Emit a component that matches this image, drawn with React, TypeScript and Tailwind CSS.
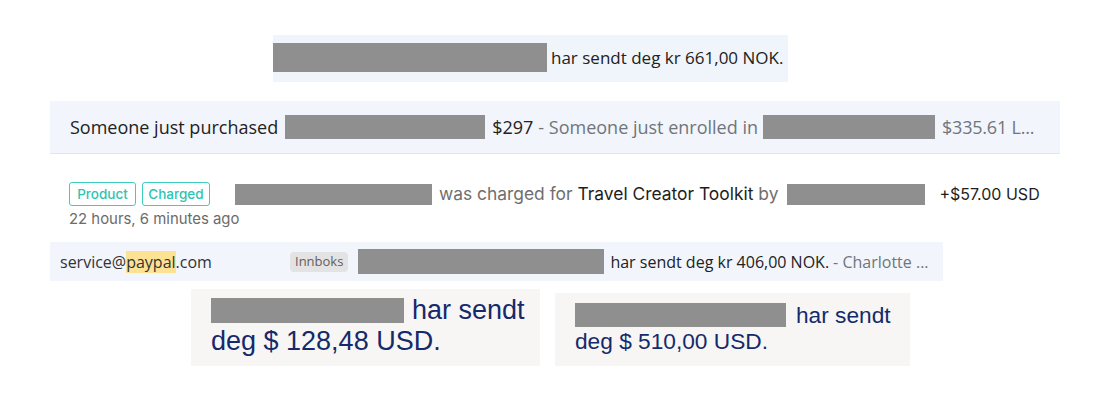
import React from "react";

export default function App() {
  return (
    <div className="w-[1100px] h-[400px] bg-white flex flex-col overflow-hidden">
      {/* Row 1 */}
      <div className="mt-[35px] ml-[273px] w-[515px] h-[47px] bg-[#f0f4fb] flex items-center font-['Open_Sans',sans-serif] text-[17px] text-[#222]">
        <span className="inline-block bg-[#8f8f8f] w-[274px] h-[29px] -mt-[3px]" />
        <span className="ml-[4px] -mt-[2px]">har sendt deg kr 661,00 NOK.</span>
      </div>

      {/* Row 2 */}
      <div className="mt-[19px] ml-[50px] w-[1010px] h-[53px] bg-[#f2f5fc] border-b border-[#e2e5ea] flex items-center pl-[20px] font-['Open_Sans',sans-serif] text-[18px] whitespace-nowrap">
        <span className="text-[#222]">Someone just purchased</span>
        <span className="inline-block bg-[#8f8f8f] w-[200px] h-[24px] ml-[7px]" />
        <span className="text-[#222] ml-[7px]">$297</span>
        <span className="text-[#70757a] ml-[5px]">- Someone just enrolled in</span>
        <span className="inline-block bg-[#8f8f8f] w-[172px] h-[24px] ml-[5px]" />
        <span className="text-[#70757a] ml-[7px] tracking-[-0.2px]">$335.61 L...</span>
      </div>

      {/* Row 3 */}
      <div className="mt-[28px] ml-[69px] flex items-start font-['Inter',sans-serif] whitespace-nowrap">
        <div className="flex flex-col w-[166px]">
          <div className="flex gap-[6px]">
            <span className="h-[24px] w-[67px] border border-[#3ccfc0] rounded-[3px] text-[#2ec4b3] text-[13.5px] font-medium flex items-center justify-center">
              Product
            </span>
            <span className="h-[24px] w-[68px] border border-[#3ccfc0] rounded-[3px] text-[#2ec4b3] text-[13.5px] font-medium flex items-center justify-center">
              Charged
            </span>
          </div>
          <span className="mt-[4px] text-[14.9px] leading-[18px] text-[#6b6b6b]">22 hours, 6 minutes ago</span>
        </div>
        <div className="flex items-center h-[22px] mt-[1px] text-[17.4px]">
          <span className="inline-block bg-[#8f8f8f] w-[197px] h-[21px]" />
          <span className="ml-[7px] text-[#6f6f6f]">was charged for</span>
          <span className="ml-[5px] text-[#1e1e1e]">Travel Creator Toolkit</span>
          <span className="ml-[5px] text-[#6f6f6f]">by</span>
          <span className="inline-block bg-[#8f8f8f] w-[138px] h-[21px] ml-[9px]" />
          <span className="ml-[14px] text-[16px] text-[#1e1e1e]">+$57.00 USD</span>
        </div>
      </div>

      {/* Row 4 */}
      <div className="mt-[14px] ml-[50px] w-[893px] h-[39px] bg-[#f2f5fc] flex items-center pl-[10px] font-['Open_Sans',sans-serif] text-[16px] whitespace-nowrap">
        <span className="w-[230px] text-[#333]">
          service@<span className="bg-[#fde293]">paypal</span>.com
        </span>
        <span className="h-[20px] px-[5px] rounded-[4px] bg-[#e3e3e3] text-[#5f5f5f] text-[13px] flex items-center">Innboks</span>
        <span className="inline-block bg-[#8f8f8f] w-[246px] h-[25px] ml-[10px]" />
        <span className="ml-[6px] text-[#222]">har sendt deg kr 406,00 NOK.</span>
        <span className="ml-[4px] text-[#70757a]">- Charlotte ...</span>
      </div>

      {/* Row 5 */}
      <div className="mt-[8px] flex items-start font-['Liberation_Sans',Arial,sans-serif] text-[#152a6b] whitespace-nowrap">
        <div className="ml-[191px] w-[349px] h-[77px] bg-[#f7f6f5] pl-[20px] pt-[6px] flex flex-col text-[27px] leading-[31px]">
          <div className="flex items-center">
            <span className="inline-block bg-[#8f8f8f] w-[193px] h-[25px]" />
            <span className="ml-[8px]">har sendt</span>
          </div>
          <div>deg $ 128,48 USD.</div>
        </div>
        <div className="ml-[15px] mt-[4px] w-[355px] h-[73px] bg-[#f7f6f5] pl-[20px] pt-[9px] flex flex-col text-[22.7px] leading-[26px]">
          <div className="flex items-center">
            <span className="inline-block bg-[#8f8f8f] w-[211px] h-[24px]" />
            <span className="ml-[10px]">har sendt</span>
          </div>
          <div>deg $ 510,00 USD.</div>
        </div>
      </div>
    </div>
  );
}
